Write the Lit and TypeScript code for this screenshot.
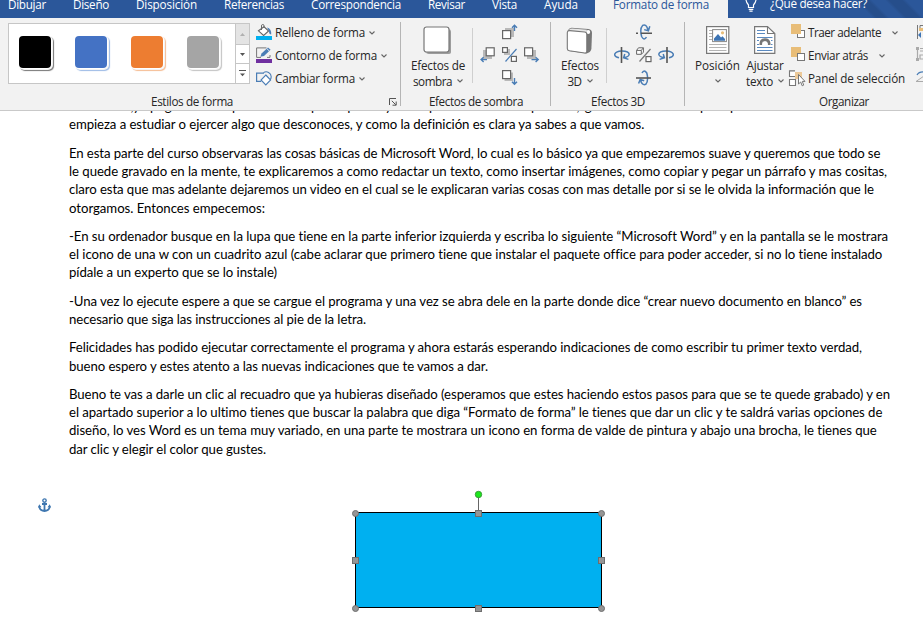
import { LitElement, html, svg, css } from "lit";
import { customElement, property } from "lit/decorators.js";
import { styleMap } from "lit/directives/style-map.js";

/* A single line of text whose tracking is adjusted to fill a given width. */
@customElement("fit-text")
class FitText extends LitElement {
  @property() text = "";
  @property({ type: Number }) w = 0;
  static styles = css`
    :host { display: block; flex: none; white-space: pre; }
  `;
  render() {
    return html`<span>${this.text}</span>`;
  }
  updated() {
    this.style.width = `${this.w}px`;
    const span = this.renderRoot.querySelector("span") as HTMLElement;
    span.style.letterSpacing = "0px";
    const natural = span.getBoundingClientRect().width;
    span.style.letterSpacing = `${(this.w - natural) / this.text.length}px`;
  }
}

const fit = (text: string, w: number) => html`<fit-text .text=${text} .w=${w}></fit-text>`;
const icon = (w: number, h: number, body: unknown) =>
  html`<svg class="icon" width=${w} height=${h} viewBox="0 0 ${w} ${h}" fill="none">${body}</svg>`;
const chevron = html`<svg class="chev" width="6" height="4" viewBox="0 0 6 4" fill="none"><path d="M.5 .5 3 3 5.5 .5" stroke="#666" stroke-width="1.1"/></svg>`;

const tabs: [string, number][] = [
  ["Dibujar", 38], ["Diseño", 36], ["Disposición", 61], ["Referencias", 60],
  ["Correspondencia", 90], ["Revisar", 37], ["Vista", 25], ["Ayuda", 34],
];

const swatches = [
  { fill: "#000000", glow: "#777777" },
  { fill: "#4472c4", glow: "#9dbbe6" },
  { fill: "#ed7d31", glow: "#f5bd94" },
  { fill: "#a5a5a5", glow: "#c4c4c4" },
];

const fillIcon = icon(16, 16, svg`
  <path d="M2.5 6.8 8 2.8 12.6 7 7.6 11.4Z" fill="#fff" stroke="#666" stroke-width="1.1"/>
  <path d="M5.5 6V1.2Q6.8-.3 8 1.2V4" stroke="#666"/>
  <path d="M11 3.6Q15.5 4.5 15.2 10.5 13 10.5 13 7Z" fill="#4a7db5"/>
  <rect y="12" width="16" height="4" fill="#00b0f0"/>`);
const outlineIcon = icon(16, 16, svg`
  <path d="M10.5.9H.6V10.4H5M14 8V10.4H11" stroke="#777"/>
  <path d="M4.4 9.8 5.5 6.5 12 .6 14.6 2.8 8 8.9Z" fill="#4a7db5"/>
  <path d="M10.7 1.5 13.5 4.2" stroke="#f2f2f2" stroke-width=".9"/>
  <rect y="12" width="16" height="4" fill="#7030a0"/>`);
const changeIcon = icon(16, 16, svg`
  <path d="M7.5 2.6A5 5 0 0 1 15.2 6.8Q15.2 8.6 14 10" stroke="#4a7db5" stroke-width="1.1"/>
  <path d="M8 3.1H.6V11.4H5.2" stroke="#4a7db5" stroke-width="1.2"/>
  <path d="M9.8 5 14.6 10 9.8 15 5 10Z" fill="#fff" stroke="#4a7db5" stroke-width="1.1"/>`);

const forwardIcon = icon(15, 16, svg`
  <rect x="6.5" y="6.5" width="7" height="7" fill="#fff" stroke="#777"/>
  <rect x="0" y="0" width="10" height="10" fill="#e8bd78"/>`);
const backIcon = icon(15, 16, svg`
  <rect x="0" y="0" width="10" height="10" fill="#e8bd78"/>
  <rect x="6.5" y="6.5" width="7" height="7" fill="#fff" stroke="#777"/>`);
const panelIcon = icon(17, 17, svg`
  <path d="M5 .9H-.5V6.5H5.5" fill="#fff" stroke="#777" stroke-width="1.1"/>
  <path d="M-.5 9.5H5.5V15.5H-.5Z" fill="#fff" stroke="#777" stroke-width="1.1"/>
  <path d="M5 2H12V9H5Z" fill="#ecc998"/>
  <path d="M8.5 4.5V14L10.7 12 12.2 15.8 13.7 15.1 12.3 11.4H15Z" fill="#fff" stroke="#777"/>`);

const shadowBig = icon(30, 30, svg`
  <rect x="4" y="4" width="24" height="24" rx="2.5" fill="#999" opacity=".65"/>
  <rect x="3" y="3" width="25" height="25" rx="2.5" fill="#888" opacity=".6"/>
  <rect x="1" y="1" width="25" height="25" rx="2.5" fill="#fff" stroke="#777" stroke-width="1.2"/>`);
const cubeBig = icon(28, 28, svg`
  <path d="M1.6 4Q2.6 1 5.5 .7L22.5 2Q26 2.6 26 6L25.4 22Q24.6 25.6 20.5 26.4L17 26 3 24Z" fill="#777"/>
  <path d="M2.6 3.6Q3.6 1.6 6 1.6L21 2.8 20 5.4 4 4.2Z" fill="#e6e6e6"/>
  <circle cx="22.2" cy="5" r="2" fill="#fff"/>
  <path d="M3.8 3.6 18.6 5Q20.8 5.2 20.8 7.6V24Q20.8 26.3 18.6 26L3.4 23.8Q1.3 23.4 1.3 21.4V5.8Q1.3 3.5 3.8 3.6Z" fill="#fff" stroke="#777" stroke-width="1.1"/>`);

const BOX = (x: number, y: number, s: number) =>
  svg`<rect x=${x} y=${y} width=${s} height=${s} fill="#fff" stroke="#666" stroke-width="1.2"/>`;
const GREY = (x: number, y: number, s: number) =>
  svg`<rect x=${x} y=${y} width=${s} height=${s} fill="#b9b9b9"/>`;

const shadowPad = {
  up: icon(16, 16, svg`${GREY(3, 4, 9)}${BOX(0.6, 6.6, 8)}<path d="M12.5 7V1.5M10 3.8 12.5 1.2 15 3.8" stroke="#4a7db5" stroke-width="1.4"/>`),
  left: icon(16, 16, svg`${GREY(3, 3, 9)}${BOX(6.2, 0.8, 8)}<path d="M7 12.6H1M3.6 10.2 1.1 12.6 3.6 15" stroke="#4a7db5" stroke-width="1.4"/>`),
  mid: icon(16, 16, svg`${GREY(2, 2, 6)}${BOX(0.6, 0.6, 4.8)}${BOX(9.4, 9.4, 5)}<path d="M3.5 14.5 14.5 2" stroke="#4a7db5" stroke-width="1.2"/>`),
  right: icon(16, 16, svg`${GREY(3, 3, 9)}${BOX(0.6, 0.8, 8)}<path d="M7.5 12.6H14M11.6 10.2 14.2 12.6 11.6 15" stroke="#4a7db5" stroke-width="1.4"/>`),
  down: icon(16, 16, svg`${GREY(2.5, 2.5, 8.5)}${BOX(0.6, 0.6, 8)}<path d="M12.5 8V14M10 11.7 12.5 14.3 15 11.7" stroke="#4a7db5" stroke-width="1.4"/>`),
};
const rotatePad = {
  up: icon(16, 16, svg`<path d="M10.5 13.2Q8 17 5.6 12.5 3.6 4.5 6.6 1.4 10.2-.6 12 6M8.2 5.6 12.4 6.8 13.8 2.2" stroke="#4a7db5" stroke-width="1.5"/><path d="M0 9.2H2M4.8 9.2H16" stroke="#555" stroke-width="1.6"/>`),
  left: icon(16, 16, svg`<path d="M5 10.8Q.4 9.8.7 7.2 2.5 3.9 8 4.1 14.8 4.2 15.2 7.2 15 9.6 10 10.8M10.8 7 9.6 10.8 14.4 12.4" stroke="#4a7db5" stroke-width="1.5"/><path d="M7.5 0V16" stroke="#555" stroke-width="1.6"/>`),
  mid: icon(16, 16, svg`<path d="M.6 3.4 2.5 .8H7.4V5.2L5.3 7.3H.6ZM.6 3.4H5.3V7.3M5.3 3.4 7.4 .8" fill="#fff" stroke="#666"/>${BOX(10, 9.6, 5)}<path d="M3.5 14.5 14.5 2" stroke="#777" stroke-width="1.2"/>`),
  right: icon(16, 16, svg`<path d="M11 10.8Q15.6 9.8 15.3 7.2 13.5 3.9 8 4.1 1.2 4.2.8 7.2 1 9.6 6 10.8M5.2 7 6.4 10.8 1.6 12.4" stroke="#4a7db5" stroke-width="1.5"/><path d="M9 0V16" stroke="#555" stroke-width="1.6"/>`),
  down: icon(16, 16, svg`<path d="M6 3Q8-1.2 10.8 3 12.8 10.5 9.8 14.3 6 16 4.4 9.8M2.6 13.6 4.2 9.4 8.2 10.8" stroke="#4a7db5" stroke-width="1.5"/><path d="M0 8H15" stroke="#555" stroke-width="1.6"/>`),
};

const positionIcon = icon(24, 28, svg`
  <rect x=".6" y=".6" width="22.2" height="26.8" fill="#fff" stroke="#777" stroke-width="1.2"/>
  <path d="M3 4.5H7M3 7.5H7M3 10.5H7M3 13.5H7M3 18.5H20.5M3 21.5H20.5M3 24.5H20.5" stroke="#b4b4b4"/>
  <rect x="6.6" y="3.6" width="13.8" height="12" fill="#fff" stroke="#888"/>
  <path d="M8 14.8V12.5L12 8 15 11.5 16.5 10.2 19 13V14.8Z" fill="#3d74b4"/>
  <circle cx="16.5" cy="6.8" r="1.6" fill="#e8bd78"/>`);
const wrapIcon = icon(22, 28, svg`
  <path d="M.6 .6H13.5L20.8 7.5V27.4H.6Z" fill="#fff" stroke="#777" stroke-width="1.2"/>
  <path d="M13.5 .8V7.5H20.6" stroke="#777" stroke-width="1.1"/>
  <path d="M3 4.5H11M3 7.5H11M3 11.5H18.5M3 14.5H5M17 14.5H18.5M3 18.5H5M17 18.5H18.5M3 21.5H18.5M3 24.5H18.5" stroke="#5b8ac0"/>
  <path d="M6.8 19V17.3Q7.3 13.6 11 13.6 14.7 13.6 15.2 17.3V19" stroke="#777" stroke-width="2.6"/>`);

const clippedLine: [string, number][] = [
  ["a veces nos,", 64], ["y se", 17], ["pregunta a ser una", 82], ["parte en eso es so", 79],
  ["por lo", 32], ["que", 22], ["nos es", 20], ["y a tener", 44], ["para esto en los se", 102],
  ["pasos,", 51], ["igual en eso si te es un", 118], ["por a", 30], ["pues.", 40],
];

const paragraphs: [string, number][][] = [
  [["empieza a estudiar o ejercer algo que desconoces, y como la definición es clara ya sabes a que vamos.", 575]],
  [
    ["En esta parte del curso observaras las cosas básicas de Microsoft Word, lo cual es lo básico ya que empezaremos suave y queremos que todo se", 811],
    ["le quede gravado en la mente, te explicaremos a como redactar un texto, como insertar imágenes, como copiar y pegar un párrafo y mas cositas,", 818],
    ["claro esta que mas adelante dejaremos un video en el cual se le explicaran varias cosas con mas detalle por si se le olvida la información que le", 805],
    ["otorgamos. Entonces empecemos:", 196],
  ],
  [
    ["-En su ordenador busque en la lupa que tiene en la parte inferior izquierda y escriba lo siguiente “Microsoft Word” y en la pantalla se le mostrara", 819],
    ["el icono de una w con un cuadrito azul (cabe aclarar que primero tiene que instalar el paquete office para poder acceder, si no lo tiene instalado", 813],
    ["pídale a un experto que se lo instale)", 208],
  ],
  [
    ["-Una vez lo ejecute espere a que se cargue el programa y una vez se abra dele en la parte donde dice “crear nuevo documento en blanco” es", 793],
    ["necesario que siga las instrucciones al pie de la letra.", 297],
  ],
  [
    ["Felicidades has podido ejecutar correctamente el programa y ahora estarás esperando indicaciones de como escribir tu primer texto verdad,", 793],
    ["bueno espero y estes atento a las nuevas indicaciones que te vamos a dar.", 419],
  ],
  [
    ["Bueno te vas a darle un clic al recuadro que ya hubieras diseñado (esperamos que estes haciendo estos pasos para que se te quede grabado) y en", 821],
    ["el apartado superior a lo ultimo tienes que buscar la palabra que diga “Formato de forma” le tienes que dar un clic y te saldrá varias opciones de", 814],
    ["diseño, lo ves Word es un tema muy variado, en una parte te mostrara un icono en forma de valde de pintura y abajo una brocha, le tienes que", 808],
    ["dar clic y elegir el color que gustes.", 197],
  ],
];

@customElement("app-root")
class AppRoot extends LitElement {
  static styles = css`
    :host { display: flex; flex-direction: column; width: 923px; height: 625px; overflow: hidden; background: #fff;
      font-family: "Open Sans", "Noto Sans", sans-serif; font-size: 11.7px; line-height: 16px; color: #262626; }
    svg { display: block; flex: none; }
    .tabs { display: flex; flex: none; height: 18px; background: #2b579a; color: #fff; overflow: hidden; }
    .tablist { display: flex; gap: 27px; padding-left: 8px; width: 587px; }
    .tabs fit-text { margin-top: -4px; }
    .active { display: flex; width: 115px; padding-left: 18px; background: #f2f2f2; color: #2b579a; }
    .tell { display: flex; flex: 1; padding-left: 17px; gap: 13px;
      background: linear-gradient(45deg, #2b579a 0 68%, #264e8b 70% 74%, #2b579a 76% 82%, #264e8b 84% 90%, #2b579a 92%); }
    .tell fit-text { margin-top: -5px; }
    .ribbon { display: flex; flex: none; height: 92px; background: #f2f2f2; border-bottom: 1px solid #c9c9c9; overflow: hidden; }
    .group { display: flex; flex-direction: column; flex: none; margin-top: 4px; height: 84px; border-right: 1px solid #b5b5b5; box-sizing: border-box; }
    .g1 { width: 401px; } .g2 { width: 150px; } .g3 { width: 134px; } .g4 { width: 300px; border: 0; }
    .body { display: flex; height: 70px; flex: none; }
    .foot { display: flex; height: 14px; margin-top: 2px; flex: none; line-height: 15px; }
    .g1 .foot { padding-left: 151px; } .g2 .foot { padding-left: 28px; } .g3 .foot { padding-left: 40px; } .g4 .foot { padding-left: 134px; }
    .launcher { margin: 4px 0 0 156px; }
    .gallery { display: flex; margin: 1px 0 0 8px; width: 242px; height: 61px; box-sizing: border-box; border: 1px solid #c6c6c6; background: #fff; overflow: hidden; }
    .swatches { display: flex; gap: 24px; padding: 12px 0 0 10px; width: 216px; flex: none; }
    .swatch { width: 32px; height: 32px; border-radius: 4px; flex: none; }
    .scroll { display: grid; grid-template-rows: 21px 19px 19px; width: 14px; border-left: 1px solid #c6c6c6; }
    .scroll div { display: flex; align-items: center; justify-content: center; border-bottom: 1px solid #c6c6c6; }
    .scroll div:first-child { background: #e4e4e4; }
    .scroll div:last-child { border: 0; }
    .cmds { display: flex; flex-direction: column; }
    .g1 .cmds { margin-left: 6px; }
    .cmd { display: flex; height: 23px; align-items: flex-start; }
    .cmd .icon { margin-top: 2px; }
    .cmd fit-text { margin-top: 2px; }
    .cmd .chev { margin: 9px 0 0 4px; }
    .g1 .cmd .icon { margin-right: 3px; }
    .big { display: flex; flex-direction: column; align-items: center; flex: none; }
    .big .icon { margin: 4px 0 0; height: 30px; overflow: visible; }
    .pos .icon, .wrap .icon { height: 28px; margin-bottom: 2px; }
    .l1 { margin-top: 1px; }
    .l2 { display: flex; align-items: center; gap: 5px; height: 16px; }
    .g2 .big { width: 54px; margin-left: 10px; }
    .g3 .big { width: 38px; margin-left: 10px; }
    .pos { width: 45px; margin-left: 10px; }
    .wrap { width: 38px; margin-left: 6px; }
    .sep { width: 1px; height: 55px; margin: 6px 0 0 7px; background: #cfcfcf; flex: none; }
    .pad { display: grid; grid-template-columns: repeat(3, 16px); grid-template-rows: repeat(3, 16px); column-gap: 6px; row-gap: 7px; margin: 2px 0 0 7px; height: 62px; }
    .up { grid-area: 1 / 2; } .left { grid-area: 2 / 1; } .mid { grid-area: 2 / 2; } .right { grid-area: 2 / 3; } .down { grid-area: 3 / 2; }
    .g4 .cmds { margin-left: 6px; width: 126px; }
    .g4 .cmd .icon { width: 17px; margin-right: 1px; overflow: visible; }
    .g4 .cmd .chev { margin-left: 11px; }
    .edge { display: flex; flex-direction: column; gap: 7px; margin-top: 2px; }
    .doc { position: relative; flex: 1; overflow: hidden; padding-left: 69px; font: 13.2px/18.35px Lato, "Open Sans", sans-serif; color: #000; }
    .clipped { display: flex; margin-top: -14px; height: 18.4px; }
    .para { margin-bottom: 9.85px; }
    .anchor { position: absolute; left: 38px; top: 387px; }
    .shape { position: absolute; left: 350px; top: 378px; }
  `;

  render() {
    const pad = (p: typeof shadowPad) => html`<div class="pad">
      <div class="up">${p.up}</div><div class="left">${p.left}</div><div class="mid">${p.mid}</div>
      <div class="right">${p.right}</div><div class="down">${p.down}</div></div>`;
    const cmd = (i: unknown, t: string, w: number, c = true) =>
      html`<div class="cmd">${i}${fit(t, w)}${c ? chevron : ""}</div>`;
    return html`
      <div class="tabs">
        <div class="tablist">${tabs.map(([t, w]) => fit(t, w))}</div>
        <div class="active">${fit("Formato de forma", 96)}</div>
        <div class="tell">
          ${icon(12, 12, svg`<path d="M1 0Q1.3 2.5 3.5 5V7.5H8.5V5Q10.7 2.5 11 0M3.7 9.3H8.3M4.4 11.2H7.6" stroke="#fff" stroke-width="1.2"/>`)}
          ${fit("¿Qué desea hacer?", 97)}
        </div>
      </div>
      <div class="ribbon">
        <div class="group g1">
          <div class="body">
            <div class="gallery">
              <div class="swatches">${swatches.map((s) => html`<div class="swatch" style=${styleMap({
                background: s.fill, boxShadow: `0 0 0 1px #fff, 1px 1px 0 1px #f4f4f4, 2px 2px 1px 1px ${s.glow}`,
              })}></div>`)}</div>
              <div class="scroll">
                <div><svg width="5" height="3"><path d="M0 3 2.5 0 5 3Z" fill="#b0b0b0"/></svg></div>
                <div><svg width="5" height="3"><path d="M0 0 2.5 3 5 0Z" fill="#555"/></svg></div>
                <div><svg width="7" height="7"><path d="M0 .5H7" stroke="#555"/><path d="M1 3.5 3.5 6.2 6 3.5Z" fill="#555"/></svg></div>
              </div>
            </div>
            <div class="cmds">
              ${cmd(fillIcon, "Relleno de forma", 90)}${cmd(outlineIcon, "Contorno de forma", 102)}${cmd(changeIcon, "Cambiar forma", 80)}
            </div>
          </div>
          <div class="foot">${fit("Estilos de forma", 82)}
            <svg class="launcher" width="8" height="8" fill="none"><path d="M.5 7V.5H7M2.8 2.8 6.8 6.8M7.2 3.5V7.2H3.5" stroke="#555"/></svg>
          </div>
        </div>
        <div class="group g2">
          <div class="body">
            <div class="big">${shadowBig}<div class="l1">${fit("Efectos de", 54)}</div><div class="l2">${fit("sombra", 39)}${chevron}</div></div>
            <div class="sep"></div>${pad(shadowPad)}
          </div>
          <div class="foot">${fit("Efectos de sombra", 94)}</div>
        </div>
        <div class="group g3">
          <div class="body">
            <div class="big">${cubeBig}<div class="l1">${fit("Efectos", 38)}</div><div class="l2">${fit("3D", 14)}${chevron}</div></div>
            <div class="sep"></div>${pad(rotatePad)}
          </div>
          <div class="foot">${fit("Efectos 3D", 54)}</div>
        </div>
        <div class="group g4">
          <div class="body">
            <div class="big pos">${positionIcon}<div class="l1">${fit("Posición", 45)}</div><div class="l2">${chevron}</div></div>
            <div class="big wrap">${wrapIcon}<div class="l1">${fit("Ajustar", 37)}</div><div class="l2">${fit("texto", 27)}${chevron}</div></div>
            <div class="cmds">
              ${cmd(forwardIcon, "Traer adelante", 73)}${cmd(backIcon, "Enviar atrás", 60)}${cmd(panelIcon, "Panel de selección", 97, false)}
            </div>
            <div class="edge">
              ${icon(16, 16, svg`<path d="M1.5 1V15M4 1.5H10V6H4Z" stroke="#777"/><path d="M3 4H9V7H3Z" fill="#e8bd78"/><path d="M2 11 5 8V14Z" fill="#3d74b4"/>`)}
              ${icon(16, 16, svg`<path d="M0 0H3V3H0ZM0 11H3V14H0Z" fill="#aaa"/><path d="M1.5 1V14M4 1.5H9M4 4H9V8H4V12H9" stroke="#aaa" stroke-width="1.2"/>`)}
              ${icon(16, 16, svg`<path d="M1 5Q3 1.5 8 2" stroke="#4a7db5" stroke-width="1.3"/><path d="M0 11.5H8V6Z" stroke="#aaa"/>`)}
            </div>
          </div>
          <div class="foot">${fit("Organizar", 50)}</div>
        </div>
      </div>
      <div class="doc">
        <div class="clipped">${clippedLine.map(([t, w]) => fit(t, w))}</div>
        ${paragraphs.map((p) => html`<div class="para">${p.map(([t, w]) => fit(t, w))}</div>`)}
        <svg class="anchor" width="13" height="15" viewBox="0 0 13 15" fill="none">
          <circle cx="6.5" cy="2.6" r="1.7" stroke="#3f77b0" stroke-width="1.4"/>
          <path d="M6.5 4.5V13M4 6H9M1.2 8.2Q1.5 12.7 6.5 13 11.5 12.7 11.8 8.2" stroke="#3f77b0" stroke-width="1.8"/>
          <path d="M0 9.5 1.2 6.3 3.5 9.2ZM13 9.5 11.8 6.3 9.5 9.2Z" fill="#3f77b0"/>
        </svg>
        <svg class="shape" width="257" height="124" viewBox="350 489 257 124" fill="none">
          <rect x="355.5" y="512.5" width="246" height="95" fill="#00b0f0" stroke="#000"/>
          <path d="M478.5 497V512" stroke="#666"/>
          <circle cx="478.5" cy="494.5" r="3.2" fill="#1ce81c" stroke="#3a9a3a"/>
          ${[[355.5, 513.5], [601.5, 513.5], [355.5, 608.5], [601.5, 608.5]].map(([x, y]) => svg`<circle cx=${x} cy=${y} r="3" fill="#959595" stroke="#6e6e6e"/>`)}
          ${[[478.5, 513.5], [355.5, 560.5], [601.5, 560.5], [478.5, 608.5]].map(([x, y]) => svg`<rect x=${x - 3} y=${y - 3} width="6" height="6" fill="#959595" stroke="#6e6e6e"/>`)}
        </svg>
      </div>`;
  }
}
